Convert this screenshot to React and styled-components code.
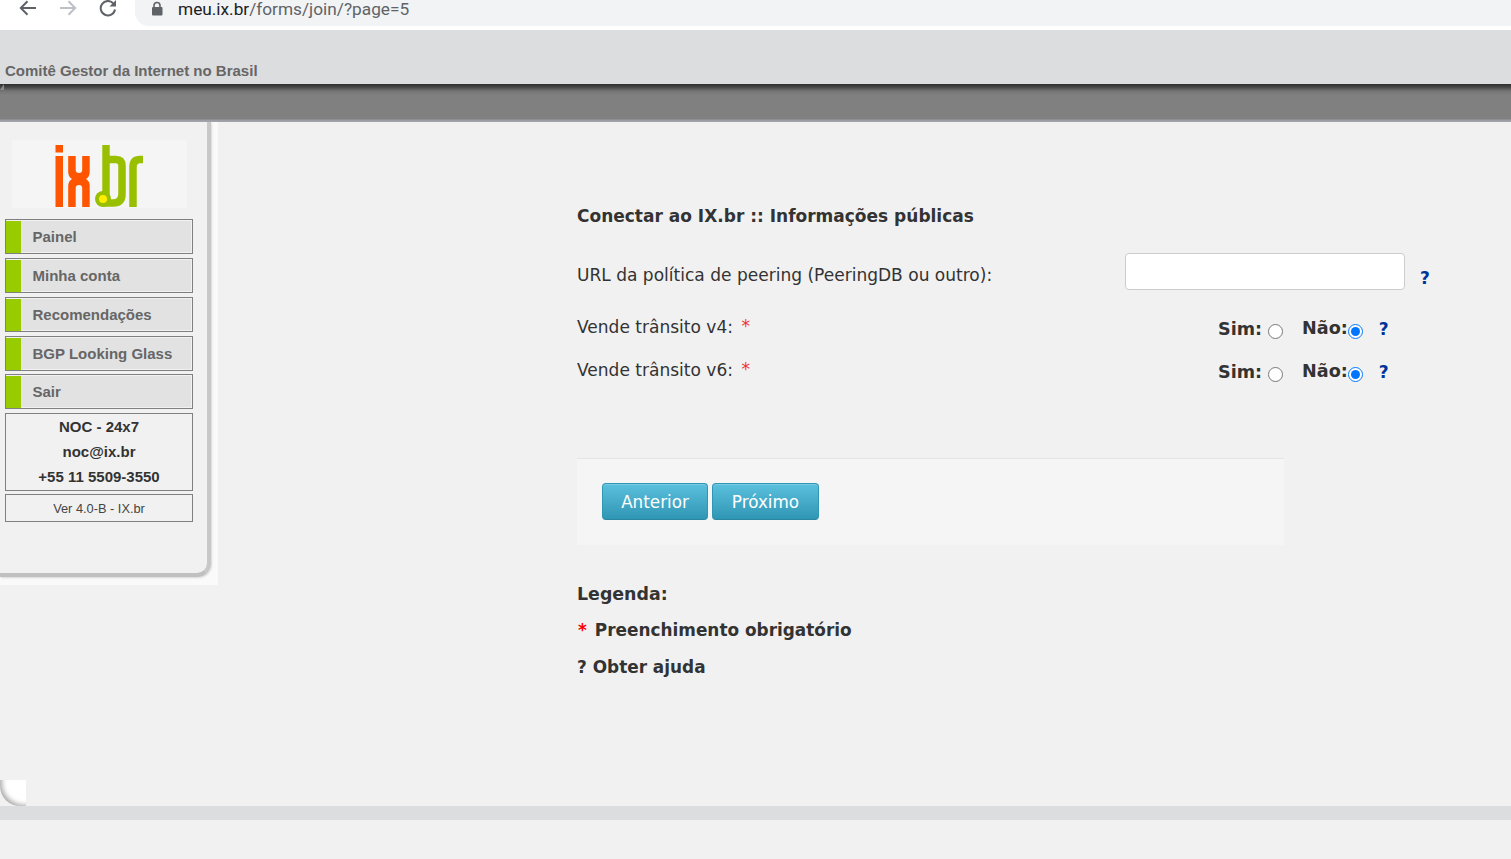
import React from "react";
import styled, { createGlobalStyle } from "styled-components";

const Global = createGlobalStyle`
  html, body { margin: 0; padding: 0; background: #f1f1f1; overflow: hidden; }
  * { box-sizing: border-box; }
`;

const Page = styled.div`
  width: 1511px;
  height: 859px;
  display: flex;
  flex-direction: column;
  font-family: "DejaVu Sans", Verdana, sans-serif;
  color: #333;
  background: #f1f1f1;
`;

const BrowserBar = styled.div`
  height: 31px;
  flex: none;
  background: #fff;
  border-bottom: 1px solid #dadce0;
  display: flex;
  align-items: flex-start;
  padding-left: 18px;
`;

const NavButton = styled.span`
  width: 20px;
  height: 20px;
  display: block;
  margin-right: ${(p) => p.$gap}px;
  margin-top: -2px;
  color: ${(p) => p.$color};
  svg { display: block; }
`;

const Omnibox = styled.div`
  flex: 1;
  height: 26px;
  margin-left: -3px;
  background: #f1f3f4;
  border-bottom-left-radius: 14px;
  display: flex;
  align-items: flex-start;
  padding-left: 16px;
`;

const Url = styled.span`
  font: 400 17.25px/18px Roboto, sans-serif;
  color: #5f6368;
  margin-left: 15px;
  white-space: nowrap;
  b { font-weight: 400; color: #202124; }
`;

const Header = styled.header`
  height: 53px;
  flex: none;
  background: #dcdddf;
  display: flex;
  align-items: flex-end;
  padding: 0 0 4px 5px;
  font: 700 15px/18px "Liberation Sans", Arial, sans-serif;
  color: #666;
`;

const DarkBar = styled.div`
  height: 38px;
  flex: none;
  position: relative;
  background: linear-gradient(#2f2f2f 0, #444 3px, #747474 7px, #808080 11px, #808080 35px, #9a9ca3 36px, #a2a4aa 38px);
  &::before {
    content: "";
    position: absolute;
    left: 0;
    top: 0;
    border-style: solid;
    border-width: 0 0 6px 4px;
    border-color: transparent transparent #8a8a8a transparent;
  }
`;

const Body = styled.div`
  flex: none;
  height: 684px;
  display: flex;
  align-items: flex-start;
  position: relative;
`;

const Sidebar = styled.aside`
  width: 218px;
  height: 463px;
  flex: none;
  background: #fafafa;
  padding-right: 7px;
  padding-bottom: 8px;
`;

const SidePanel = styled.div`
  height: 100%;
  background: #f1f1f1;
  border-right: 4px solid #c8c8c8;
  border-bottom: 4px solid #c0c0c0;
  border-bottom-right-radius: 14px;
  box-shadow: 1px 1px 2px #d8d8d8;
  padding: 18px 14px 0 5px;
`;

const LogoBox = styled.div`
  width: 175px;
  height: 68px;
  margin: 0 0 11px 7px;
  background: #f5f5f5;
  svg { display: block; margin: 0 auto; position: relative; top: -2px; }
`;

const Menu = styled.nav`
  display: flex;
  flex-direction: column;
  gap: 4px;
`;

const MenuItem = styled.a`
  display: flex;
  align-items: center;
  height: 35px;
  margin-top: ${(p) => (p.$tight ? -1 : 0)}px;
  border: 1px solid #808080;
  background: #e2e2e2;
  box-shadow: inset -1px -1px 0 #f1f1f1, inset 0 1px 0 #f1f1f1;
  font: 700 15px/18px "Liberation Sans", Arial, sans-serif;
  color: #666;
  &::before {
    content: "";
    align-self: stretch;
    width: 15px;
    margin: 1px 11.5px 0 0;
    background: #99cc00;
  }
`;

const NocBox = styled.div`
  margin-top: 4px;
  height: 78px;
  border: 1px solid #808080;
  text-align: center;
  font: 700 15px/25px "Liberation Sans", Arial, sans-serif;
  color: #333;
`;

const VersionBox = styled.div`
  margin-top: 3px;
  height: 28px;
  border: 1px solid #808080;
  text-align: center;
  font: 400 12.8px/27px "Liberation Sans", Arial, sans-serif;
  color: #444;
`;

const Main = styled.main`
  flex: 1;
  padding: 84px 0 0 359px;
`;

const Title = styled.h1`
  margin: 0 0 27px;
  font-size: 17px;
  line-height: 20px;
  font-weight: 700;
  color: #333;
`;

const FormGrid = styled.div`
  display: grid;
  grid-template-columns: 548px 1fr;
  grid-auto-rows: auto;
`;

const Label = styled.label`
  font-size: 17.05px;
  line-height: 20px;
  color: #333;
  padding-top: ${(p) => p.$top}px;
`;

const Star = styled.span`
  color: #e33;
  position: relative;
  top: -1px;
  margin-left: 3px;
`;

const Controls = styled.div`
  display: flex;
  align-items: flex-start;
  height: ${(p) => p.$height}px;
`;

const TextInput = styled.input`
  width: 280px;
  height: 37px;
  background: #fff;
  border: 1px solid #ccc;
  border-radius: 4px;
  outline: none;
`;

const Help = styled.span`
  font-size: 17px;
  line-height: 20px;
  font-weight: 700;
  color: #003399;
  margin-left: ${(p) => p.$left}px;
  margin-top: ${(p) => p.$top}px;
`;

const RadioGroup = styled.div`
  display: flex;
  align-items: flex-start;
  margin-left: 93px;
`;

const ChoiceLabel = styled.span`
  font-size: 17.6px;
  line-height: 22px;
  font-weight: 700;
  color: #333;
  margin-top: ${(p) => p.$top}px;
  margin-left: ${(p) => p.$left}px;
`;

const Radio = styled.input.attrs({ type: "radio" })`
  width: 15px;
  height: 15px;
  margin: 15px 0 0 ${(p) => p.$left}px;
  accent-color: #0075ff;
`;

const ActionBar = styled.div`
  width: 707px;
  height: 87px;
  margin-top: 63px;
  background: #f5f5f5;
  border-top: 1px solid #e5e5e5;
  padding: 24px 0 0 25px;
  display: flex;
  align-items: flex-start;
  gap: 4px;
`;

const Button = styled.button`
  width: ${(p) => p.$width}px;
  height: 37px;
  padding: 0;
  font-family: "DejaVu Sans", Verdana, sans-serif;
  font-size: 16.8px;
  color: #fff;
  background: linear-gradient(#5bc0de, #2f96b4);
  border: 1px solid #2f96b4;
  border-bottom-color: #2a86a1;
  border-radius: 4px;
  box-shadow: inset 0 1px 0 rgba(255, 255, 255, 0.2);
`;

const LegendTitle = styled.h2`
  margin: 38px 0 0;
  font-size: 17.4px;
  line-height: 22px;
  font-weight: 700;
  color: #333;
`;

const LegendLine = styled.p`
  margin: ${(p) => p.$top}px 0 0;
  font-size: 16.9px;
  line-height: 20px;
  font-weight: 700;
  color: #333;
`;

const RedStar = styled.span`
  color: #f00;
  margin: 0 8px 0 1px;
`;

const Corner = styled.div`
  position: absolute;
  left: 0;
  bottom: 0;
  width: 26px;
  height: 26px;
  overflow: hidden;
  background: #f1f1f1;
  &::before {
    content: "";
    position: absolute;
    inset: -10px 0 0 0;
    background: #fff;
    border-bottom-left-radius: 20px;
    box-shadow: inset 4px -3px 5px -2px #aaa;
  }
`;

const FooterBand = styled.div`
  height: 14px;
  flex: none;
  background: #dcdddf;
`;

const Logo = () => (
  <svg width="110" height="75" viewBox="45 138 110 75" fill="none">
    <g fill="#ff5500">
      <rect x="55.5" y="145" width="7.5" height="7.5" />
      <rect x="55.5" y="156" width="7.5" height="51" />
      <path d="M68.2 156H75.7V170Q75.7 173 79 173Q82.2 173 82.2 170V156H89.7V172Q89.7 177 86 179Q89.7 181 89.7 186V207H82.2V188Q82.2 185 79 185Q75.7 185 75.7 188V207H68.2V186Q68.2 181 72 179Q68.2 177 68.2 172Z" />
    </g>
    <g stroke="#99c000" strokeWidth="7.5">
      <path d="M106 145V196" />
      <path d="M106 159.5H116Q122 159.5 122 166V194Q122 203 113 203H102" />
      <path d="M133 207V167Q133 159.5 140 159.5H143" />
    </g>
    <circle cx="103" cy="199" r="8" fill="#99c000" />
    <circle cx="103" cy="199" r="4" fill="#ffee00" />
  </svg>
);

const BackIcon = () => (
  <svg width="20" height="20" viewBox="0 0 20 20" fill="none" stroke="currentColor" strokeWidth="2">
    <path d="M18 10H3M9.5 3.2L2.8 10l6.7 6.8" />
  </svg>
);
const ForwardIcon = () => (
  <svg width="20" height="20" viewBox="0 0 20 20" fill="none" stroke="currentColor" strokeWidth="2">
    <path d="M2 10h15M10.5 3.2L17.2 10l-6.7 6.8" />
  </svg>
);
const ReloadIcon = () => (
  <svg width="20" height="20" viewBox="0 0 20 20" fill="none">
    <path d="M15.5 5.6A7.2 7.2 0 1 0 17 11.5" stroke="currentColor" strokeWidth="2" />
    <path d="M18 2v6.5h-6.5z" fill="currentColor" />
  </svg>
);
const LockIcon = () => (
  <svg width="12" height="16" viewBox="0 0 12 16" style={{ display: "block", marginTop: 1, flex: "none" }}>
    <path d="M3 6V4.5a3 3 0 0 1 6 0V6" fill="none" stroke="#5f6368" strokeWidth="1.6" />
    <rect x="1" y="6" width="10.5" height="8.5" rx="1" fill="#5f6368" />
  </svg>
);

const menu = ["Painel", "Minha conta", "Recomendações", "BGP Looking Glass", "Sair"];

export default function App() {
  return (
    <Page>
      <Global />
      <BrowserBar>
        <NavButton $gap={20} $color="#5f6368"><BackIcon /></NavButton>
        <NavButton $gap={20} $color="#bdc1c6"><ForwardIcon /></NavButton>
        <NavButton $gap={20} $color="#5f6368"><ReloadIcon /></NavButton>
        <Omnibox>
          <LockIcon />
          <Url><b>meu.ix.br</b>/forms/join/?page=5</Url>
        </Omnibox>
      </BrowserBar>
      <Header>Comitê Gestor da Internet no Brasil</Header>
      <DarkBar />
      <Body>
        <Sidebar>
          <SidePanel>
            <LogoBox><Logo /></LogoBox>
            <Menu>
              {menu.map((m) => (
                <MenuItem key={m} $tight={m === "Sair"}>{m}</MenuItem>
              ))}
            </Menu>
            <NocBox>
              NOC - 24x7<br />noc@ix.br<br />+55 11 5509-3550
            </NocBox>
            <VersionBox>Ver 4.0-B - IX.br</VersionBox>
          </SidePanel>
        </Sidebar>
        <Main>
          <Title>Conectar ao IX.br :: Informações públicas</Title>
          <FormGrid>
            <Label $top={12}>URL da política de peering (PeeringDB ou outro):</Label>
            <Controls $height={56}>
              <TextInput />
              <Help $left={15} $top={15}>?</Help>
            </Controls>
            <Label $top={8}>Vende trânsito v4: <Star>*</Star></Label>
            <Controls $height={43}>
              <RadioGroup>
                <ChoiceLabel $top={9} $left={0}>Sim:</ChoiceLabel>
                <Radio name="v4" $left={6} />
                <ChoiceLabel $top={8} $left={19}>Não:</ChoiceLabel>
                <Radio name="v4" $left={0} defaultChecked />
                <Help $left={16} $top={10}>?</Help>
              </RadioGroup>
            </Controls>
            <Label $top={8}>Vende trânsito v6: <Star>*</Star></Label>
            <Controls $height={43}>
              <RadioGroup>
                <ChoiceLabel $top={9} $left={0}>Sim:</ChoiceLabel>
                <Radio name="v6" $left={6} />
                <ChoiceLabel $top={8} $left={19}>Não:</ChoiceLabel>
                <Radio name="v6" $left={0} defaultChecked />
                <Help $left={16} $top={10}>?</Help>
              </RadioGroup>
            </Controls>
          </FormGrid>
          <ActionBar>
            <Button $width={106}>Anterior</Button>
            <Button $width={107}>Próximo</Button>
          </ActionBar>
          <LegendTitle>Legenda:</LegendTitle>
          <LegendLine $top={15}><RedStar>*</RedStar>Preenchimento obrigatório</LegendLine>
          <LegendLine $top={17}>? Obter ajuda</LegendLine>
        </Main>
        <Corner />
      </Body>
      <FooterBand />
    </Page>
  );
}
